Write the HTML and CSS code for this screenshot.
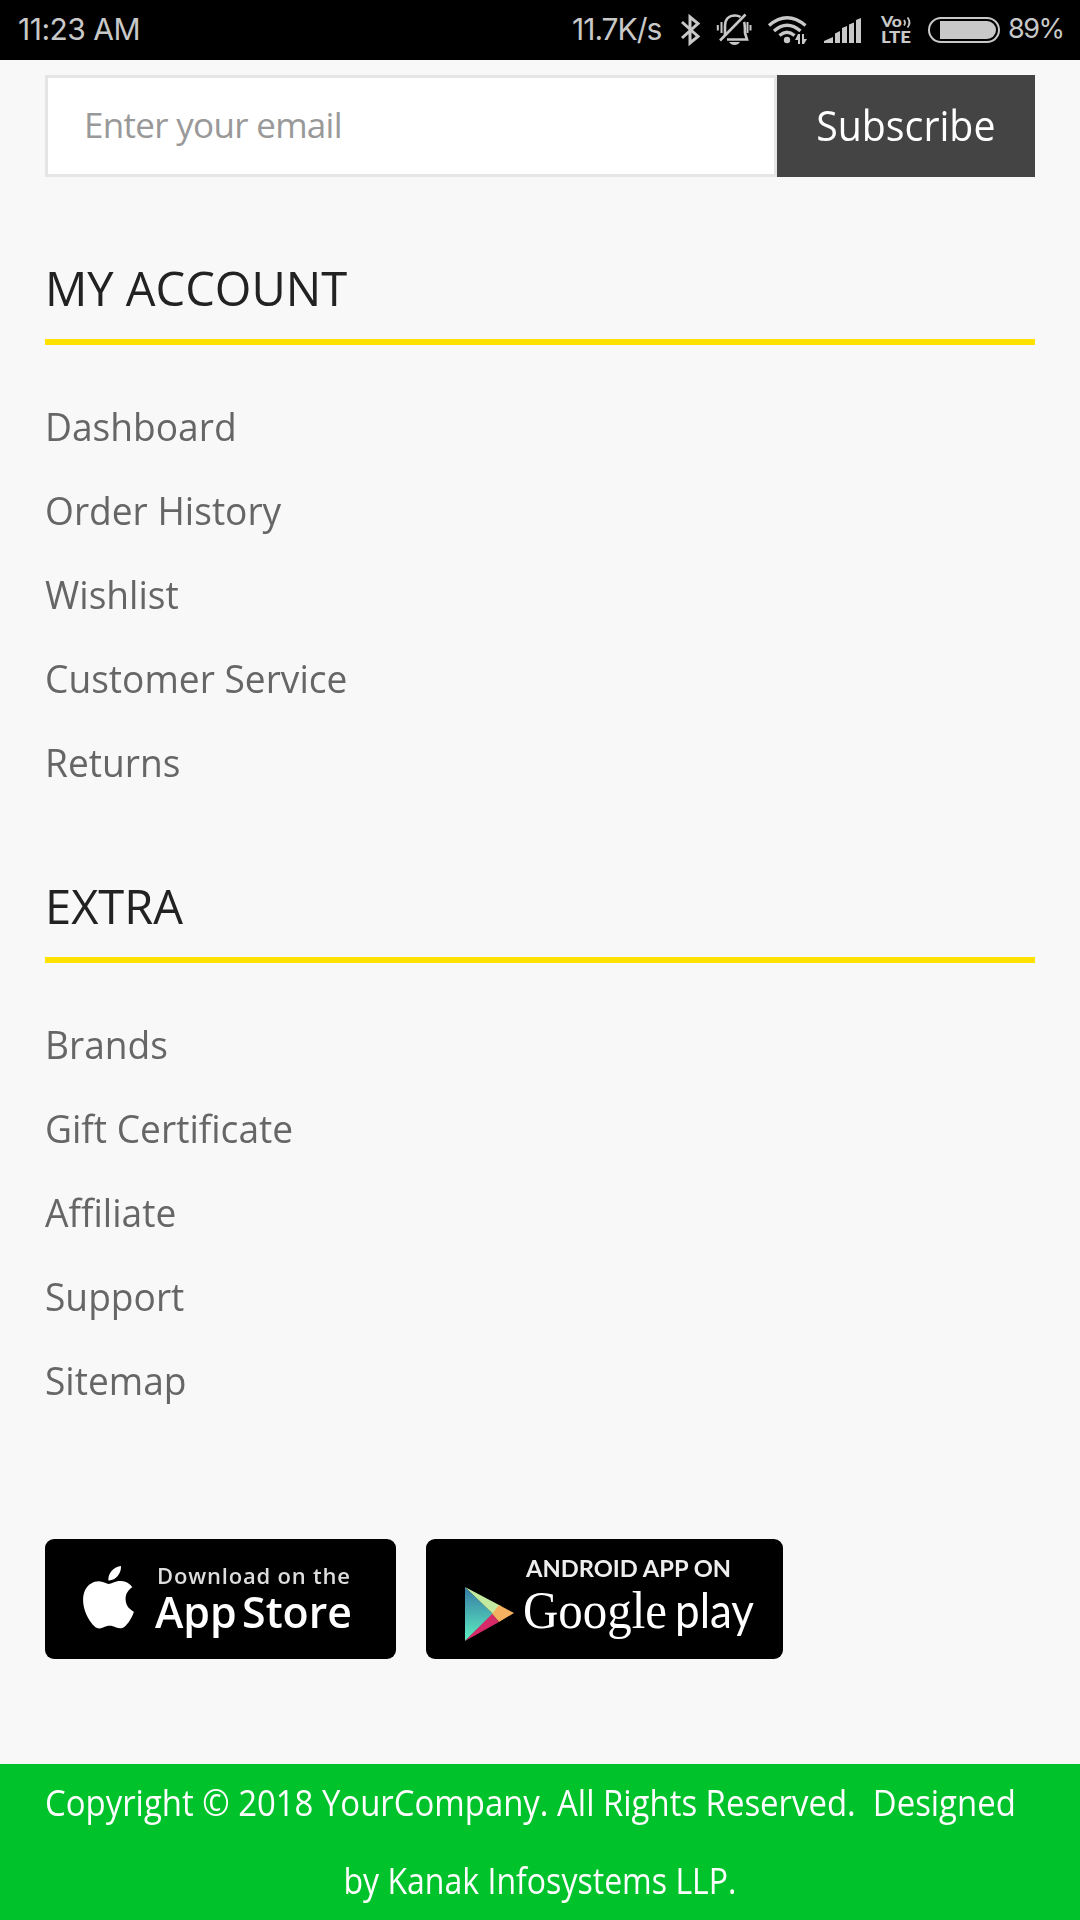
FILE: index.html
```html
<!DOCTYPE html>
<html lang="en">
<head>
    <meta charset="UTF-8">
    <meta name="viewport" content="width=device-width, initial-scale=1">
    <title>YourCompany</title>
    <link rel="stylesheet" href="styles.css">
</head>
<body>

    <!-- Status bar -->
    <div class="status-bar">
        <span class="time">11:23 AM</span>
        <span class="speed">11.7K/s</span>
        <svg class="bluetooth" width="20" height="30" viewBox="680 15 20 30">
            <path d="M682 22L698 36.500L690 43V17L698 23.500L682 38" fill="none" stroke="#c8c8c8" stroke-width="3"/>
        </svg>
        <svg class="bell" width="36" height="32" viewBox="716 14 36 32">
            <g fill="none" stroke="#c8c8c8" stroke-width="2.600">
                <path d="M725 36V26C725 19 729 15.500 735 15.500C737 15.500 739 16 740.500 17M744 22C745 24 745 28 745 33L747 39.500H727"/>
                <path d="M720 40.500L745.500 14.500"/>
                <path d="M721.500 22V33M717.800 25V30.500M747.500 22V33M750.500 25V30.500" stroke-width="2"/>
            </g>
            <path d="M729 42h11q-2 3-5.500 3t-5.500-3z" fill="#c8c8c8"/>
        </svg>
        <svg class="wifi" width="40" height="30" viewBox="768 15 40 30">
            <g fill="none" stroke="#c8c8c8" stroke-width="3.400">
                <path d="M769 25.500Q787 10 805.500 25.500"/>
                <path d="M774 31Q787 19.500 800.500 31"/>
                <path d="M779.500 35.500Q787 29 794.500 35.500"/>
            </g>
            <circle cx="787" cy="40" r="3.200" fill="#c8c8c8"/>
            <path d="M798 34h2v10h-2v-4h-3zM802 34h2v5h3l-3 5h-2z" fill="#c8c8c8"/>
        </svg>
        <svg class="signal" width="38" height="26" viewBox="824 17 38 26">
            <path d="M824 43V41L833 37V43zM835 43V33.500L840 31V43zM842 43V28L847 26V43zM849 43V24.500L854 22.500V43zM856 43V20L861 18V43z" fill="#c8c8c8"/>
        </svg>
        <svg class="volte" width="32" height="30" viewBox="880 16 32 30">
            <g fill="#c8c8c8" font-family="Lato, sans-serif" font-weight="900">
                <text x="881" y="28" font-size="15" textLength="21" lengthAdjust="spacingAndGlyphs">Vo</text>
                <text x="881" y="43.500" font-size="16.500" textLength="30" lengthAdjust="spacingAndGlyphs">LTE</text>
            </g>
            <path d="M904 21q2 2.500 0 5.500M907.500 18.500q4 5 0 10" fill="none" stroke="#c8c8c8" stroke-width="1.800"/>
        </svg>
        <svg class="battery" width="72" height="26" viewBox="928 17 72 26">
            <rect x="929" y="18" width="70" height="24" rx="12" fill="none" stroke="#c8c8c8" stroke-width="2"/>
            <path d="M940 21H987a9 9 0 0 1 0 18H940z" fill="#c8c8c8"/>
        </svg>
        <span class="percent">89%</span>
    </div>

    <div class="content">
        <!-- Newsletter -->
        <form class="newsletter">
            <input type="text" class="email" placeholder="Enter your email">
            <button type="button" class="subscribe"><span>Subscribe</span></button>
        </form>

        <!-- Footer links -->
        <div class="block">
            <h5><span>MY ACCOUNT</span></h5>
            <ul>
                <li><a>Dashboard</a></li>
                <li><a>Order History</a></li>
                <li><a>Wishlist</a></li>
                <li><a>Customer Service</a></li>
                <li><a>Returns</a></li>
            </ul>
        </div>

        <div class="block">
            <h5><span>EXTRA</span></h5>
            <ul>
                <li><a>Brands</a></li>
                <li><a>Gift Certificate</a></li>
                <li><a>Affiliate</a></li>
                <li><a>Support</a></li>
                <li><a>Sitemap</a></li>
            </ul>
        </div>

        <!-- App badges -->
        <div class="apps">
            <svg class="badge" width="351" height="120" viewBox="0 0 351 120">
                <rect width="351" height="120" rx="9" fill="#000"/>
                <g class="soft">
                    <path transform="translate(32.300 27) scale(2.600)" d="M12.152 6.896c-.948 0-2.415-1.078-3.96-1.040-2.040.027-3.910 1.183-4.961 3.014-2.117 3.675-.546 9.103 1.519 12.090 1.013 1.454 2.208 3.090 3.792 3.039 1.520-.065 2.090-.987 3.935-.987 1.831 0 2.350.987 3.960.948 1.637-.026 2.676-1.480 3.676-2.948 1.156-1.688 1.636-3.325 1.662-3.415-.039-.013-3.182-1.221-3.220-4.857-.026-3.040 2.480-4.494 2.597-4.559-1.429-2.090-3.623-2.324-4.390-2.376-2-.156-3.675 1.090-4.610 1.090zM15.530 3.830c.843-1.012 1.400-2.427 1.245-3.830-1.207.052-2.662.805-3.532 1.818-.780.896-1.454 2.338-1.273 3.714 1.338.104 2.715-.688 3.559-1.701"/>
                    <text class="sans" x="112" y="44.500" font-size="22" fill="#ddd" textLength="193">Download on the</text>
                    <text class="sans" x="110" y="89" font-size="44" word-spacing="-6" textLength="197" lengthAdjust="spacingAndGlyphs">App Store</text>
                </g>
            </svg>
            <svg class="badge" width="357" height="120" viewBox="0 0 357 120">
                <defs>
                    <linearGradient id="teal" x1="0" y1="0" x2="0" y2="1">
                        <stop offset="0" stop-color="#3578a4"/>
                        <stop offset="1" stop-color="#5df0c0"/>
                    </linearGradient>
                </defs>
                <rect width="357" height="120" rx="9" fill="#000"/>
                <g class="soft">
                    <path d="M39 48L67 75L39 102z" fill="url(#teal)"/>
                    <path d="M39 48L75 67L67 75z" fill="#c3eba0"/>
                    <path d="M73 66L88 74L73 83L66 75z" fill="#f5b060"/>
                    <path d="M66 75L73 83L39 102z" fill="#d72a68"/>
                    <text class="caps" x="100" y="38" font-size="22" fill="#eee" textLength="205" lengthAdjust="spacingAndGlyphs">ANDROID APP ON</text>
                    <text class="google" x="97" y="89" font-size="53" textLength="144" lengthAdjust="spacingAndGlyphs">Google</text>
                    <text class="play" x="249" y="89" font-size="49" textLength="79" lengthAdjust="spacingAndGlyphs">play</text>
                </g>
            </svg>
        </div>
    </div>

    <div class="copyright">
        <p class="line1">Copyright © 2018 YourCompany. All Rights Reserved.&nbsp; Designed</p>
        <p class="line2">by Kanak Infosystems LLP.</p>
    </div>

</body>
</html>
```

FILE: styles.css
```css
* {
    box-sizing: border-box;
}
body {
    margin: 0;
    background-color: #f8f8f8;
    font-family: "Open Sans", "Noto Sans", sans-serif;
    color: #666;
}
.status-bar {
    display: flex;
    align-items: center;
    height: 60px;
    padding: 0 18px;
    background: #000;
    color: #c8c8c8;
    font-family: Inter, sans-serif;
    font-size: 30px;
    letter-spacing: -0.5px;
    white-space: nowrap;
}
.status-bar svg {
    flex: none;
    overflow: visible;
    letter-spacing: 0;
}
.time {
    width: 554px;
    margin-top: -2px;
}
.speed {
    width: 108px;
    margin-top: -2px;
    letter-spacing: -1px;
}
.bell {
    margin-left: 16px;
}
.wifi {
    margin-left: 16px;
}
.signal {
    margin-left: 16px;
}
.volte {
    margin-left: 18px;
}
.battery {
    margin-left: 16px;
}
.percent {
    width: 54px;
    margin-left: 8px;
    margin-top: -4px;
    font-size: 27px;
    letter-spacing: -1.5px;
}
.content {
    padding: 15px 45px 105px;
}
.newsletter {
    display: flex;
    height: 102px;
}
.email {
    flex: 1;
    min-width: 0;
    padding: 0 36px 3px;
    border: 3px solid #e5e5e5;
    border-radius: 0;
    background: #fff;
    font-family: inherit;
    font-size: 35px;
    letter-spacing: -0.7px;
}
.email::placeholder {
    color: #999;
}
.subscribe {
    width: 258px;
    padding: 0 0 3px;
    border: 0;
    background: #444;
    color: #fff;
    font-family: inherit;
    font-size: 42px;
}
.subscribe span {
    display: inline-block;
    transform: scaleX(0.935);
}
.block {
    margin-top: 69px;
}
.newsletter + .block {
    margin-top: 78px;
}
h5 {
    margin: 0 0 39px;
    padding-bottom: 18px;
    border-bottom: 6px solid #ffe200;
    color: #222;
    font-size: 48px;
    font-weight: 400;
    line-height: 66px;
}
h5 span,
li a {
    display: inline-block;
    transform: scaleX(0.98);
    transform-origin: left;
}
ul {
    margin: 0;
    padding: 0;
    list-style: none;
}
li {
    font-size: 39px;
    line-height: 84px;
}
li a {
    transform: scaleX(0.952);
}
.apps {
    display: flex;
    gap: 30px;
    margin-top: 117px;
}
.soft {
    fill: #fff;
    filter: blur(0.7px);
}
.sans {
    font-family: "Open Sans", sans-serif;
    font-weight: 600;
}
.caps {
    font-family: Lato, sans-serif;
    font-weight: 700;
}
.google {
    font-family: "Liberation Serif", serif;
}
.play {
    font-family: Lato, sans-serif;
}
.copyright {
    height: 156px;
    background: #00c22b;
    color: #fff;
    font-size: 36px;
    line-height: 78px;
    overflow: hidden;
}
.copyright p {
    display: flex;
    justify-content: center;
    margin: 0;
    white-space: nowrap;
}
.line1 {
    padding-right: 21px;
    transform: scaleX(0.914);
}
.line2 {
    transform: scaleX(0.89);
}
```
